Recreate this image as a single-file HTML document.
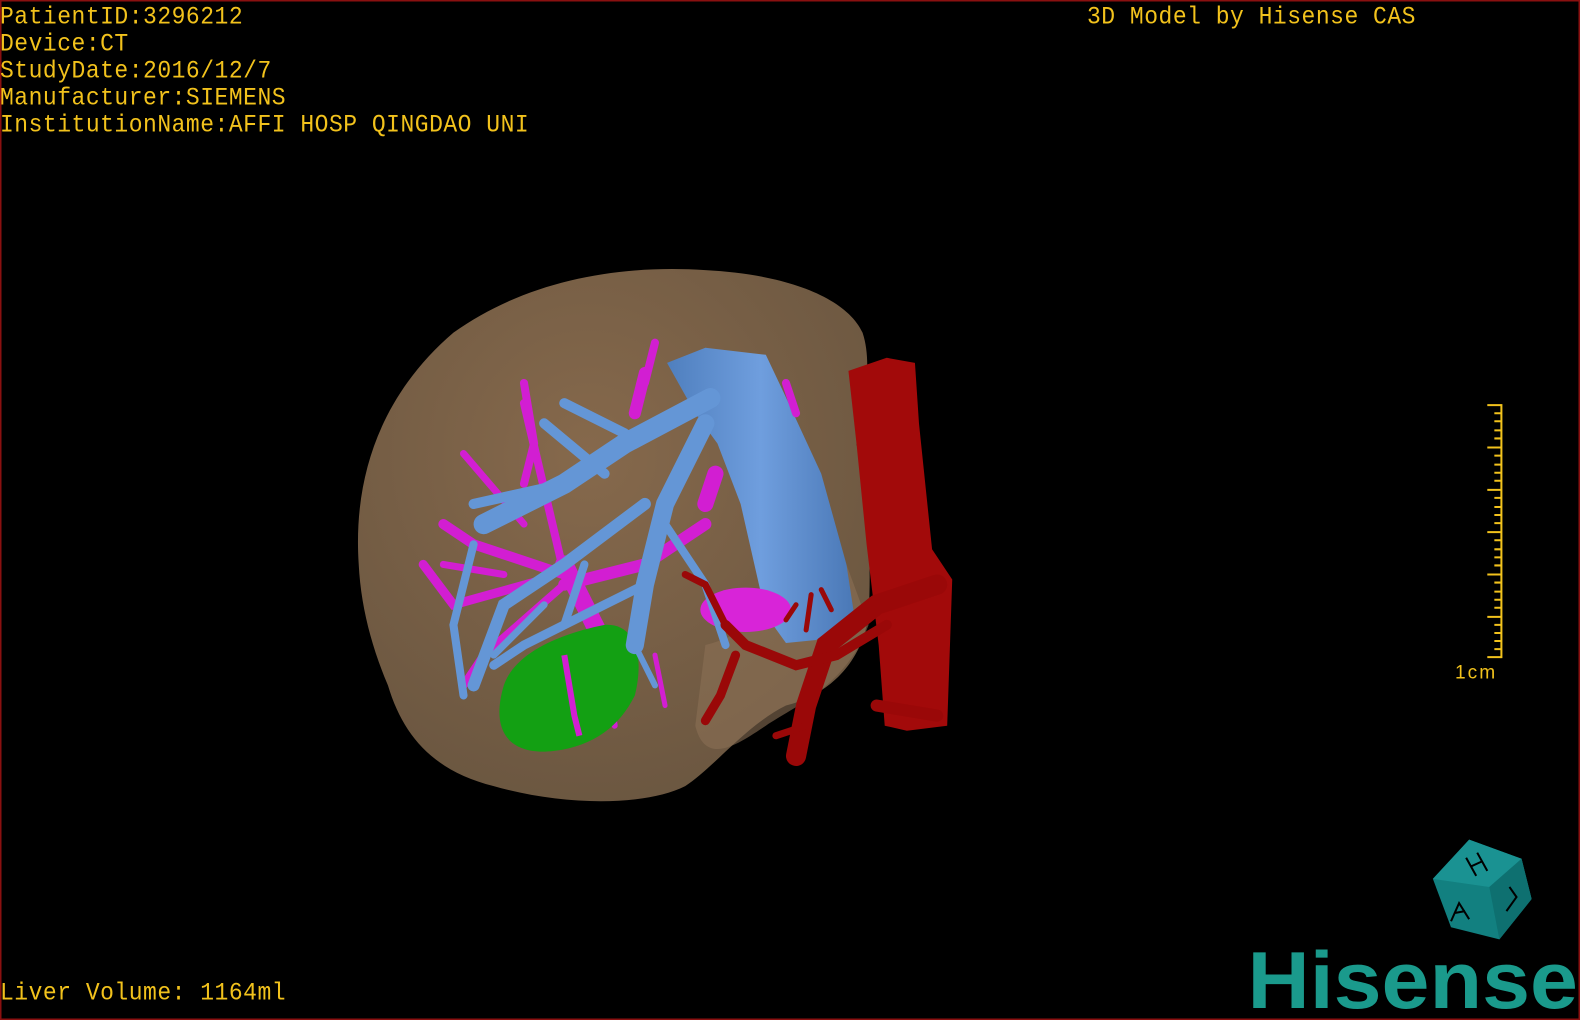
<!DOCTYPE html>
<html><head><meta charset="utf-8"><style>
html,body{margin:0;padding:0;background:#000;}
body{width:1580px;height:1020px;position:relative;overflow:hidden;}
.t{position:absolute;color:#f2c21c;font-family:"Liberation Mono",monospace;font-size:23px;line-height:25px;letter-spacing:0.5px;white-space:pre;transform:scaleY(1.08);transform-origin:top left;}
svg{position:absolute;left:0;top:0;}
</style></head><body>
<svg width="1580" height="1020" viewBox="0 0 1568 1012" preserveAspectRatio="none">
<defs>
<radialGradient id="lv" cx="0.45" cy="0.35" r="0.7"><stop offset="0" stop-color="#86694c"/><stop offset="1" stop-color="#6a5640"/></radialGradient>
<linearGradient id="ivc" x1="0" y1="0" x2="1" y2="0"><stop offset="0" stop-color="#4f7fbe"/><stop offset="0.5" stop-color="#6f9ede"/><stop offset="1" stop-color="#4a78b6"/></linearGradient>
</defs>
<rect x="0" y="0" width="1568" height="1012" fill="#000"/>
<rect x="0.5" y="0.5" width="1567" height="1011" fill="none" stroke="#8a1010" stroke-width="2"/>
<path d="M356,560 C350,470 380,390 450,330 C520,280 610,262 700,268 C780,272 840,295 856,330 C866,360 858,400 850,440 C858,480 866,540 862,610 C855,660 820,690 780,700 C740,720 710,760 680,780 C640,800 560,800 490,780 C430,765 400,730 385,680 C368,640 358,600 356,560 Z" fill="url(#lv)"/>
<path d="M700,640 C740,630 780,600 840,560 L862,620 C840,680 790,700 760,720 C730,740 700,760 690,720 Z" fill="#8a7055" opacity="0.6"/>
<path d="M662,360 L700,345 L760,352 L778,390 L815,470 L840,560 L848,612 L810,635 L780,638 L760,610 L735,500 L712,440 L690,410 Z" fill="url(#ivc)"/>
<g stroke="#d21ed2" stroke-linecap="round" fill="none">
<path d="M560,560 L600,640 L580,700" stroke-width="18"/>
<path d="M560,570 L470,540 L440,520" stroke-width="10"/>
<path d="M540,575 L450,600 L420,560" stroke-width="9"/>
<path d="M560,570 L520,400" stroke-width="8"/>
<path d="M520,520 L460,450" stroke-width="7"/>
<path d="M560,580 L480,650 L460,680" stroke-width="8"/>
<path d="M560,580 L640,560 L700,520" stroke-width="12"/>
<path d="M640,370 L630,410" stroke-width="12"/>
<path d="M650,340 L640,380" stroke-width="8"/>
<path d="M520,380 L530,440 L520,480" stroke-width="8"/>
<path d="M440,560 L500,570" stroke-width="7"/>
<path d="M780,380 L790,410" stroke-width="8"/>
<path d="M700,500 L710,470" stroke-width="16"/>
<path d="M600,650 L610,720" stroke-width="6"/>
<path d="M650,650 L660,700" stroke-width="5"/>
</g>
<ellipse cx="740" cy="605" rx="45" ry="22" fill="#d824d8"/>
<path d="M500,680 C510,650 550,630 600,620 C630,618 640,650 630,690 C615,720 590,740 550,745 C510,750 485,730 500,680 Z" fill="#13a013"/>
<path d="M560,650 L570,710 L575,730" stroke="#d21ed2" stroke-width="6" fill="none"/>
<g stroke="#6496d6" stroke-linecap="round" fill="none">
<path d="M705,395 L620,440 L560,480 L480,520" stroke-width="20"/>
<path d="M700,420 L660,500 L640,580 L630,640" stroke-width="18"/>
<path d="M640,500 L560,560 L500,600 L470,680" stroke-width="12"/>
<path d="M600,470 L540,420" stroke-width="10"/>
<path d="M560,480 L470,500" stroke-width="10"/>
<path d="M620,430 L560,400" stroke-width="10"/>
<path d="M640,580 L600,600 L520,640 L490,660" stroke-width="9"/>
<path d="M660,520 L700,580 L720,640" stroke-width="8"/>
<path d="M580,560 L560,620" stroke-width="8"/>
<path d="M540,600 L490,650" stroke-width="7"/>
<path d="M470,540 L450,620 L460,690" stroke-width="8"/>
<path d="M630,640 L650,680" stroke-width="6"/>
</g>
<path d="M842,368 L880,355 L908,360 L912,420 L925,545 L945,575 L940,720 L900,725 L878,720 L872,640 L860,540 L850,440 Z" fill="#a20a0a"/>
<g stroke="#9a0808" stroke-linecap="round" fill="none">
<path d="M930,580 L870,600 L820,640 L800,700 L790,750" stroke-width="20"/>
<path d="M880,620 L830,650 L790,660 L740,640 L720,620" stroke-width="10"/>
<path d="M720,620 L700,580 L680,570" stroke-width="7"/>
<path d="M730,650 L715,690 L700,715" stroke-width="9"/>
<path d="M800,720 L770,730" stroke-width="7"/>
<path d="M870,700 L930,710" stroke-width="12"/>
<path d="M790,600 L780,615 M805,590 L800,625 M815,585 L825,605" stroke-width="5"/>
</g>
<g stroke="#f2c21c" stroke-width="2" fill="none">
<path d="M1490,401 L1490,653"/>
<path d="M1476,402 H1490 M1476,444 H1490 M1476,486 H1490 M1476,528 H1490 M1476,570 H1490 M1476,612 H1490 M1476,652 H1490"/>
<path d="M1483,410 H1490 M1483,418 H1490 M1483,427 H1490 M1483,435 H1490 M1483,452 H1490 M1483,461 H1490 M1483,469 H1490 M1483,477 H1490 M1483,494 H1490 M1483,503 H1490 M1483,511 H1490 M1483,519 H1490 M1483,536 H1490 M1483,545 H1490 M1483,553 H1490 M1483,561 H1490 M1483,578 H1490 M1483,587 H1490 M1483,595 H1490 M1483,603 H1490 M1483,620 H1490 M1483,628 H1490 M1483,636 H1490 M1483,644 H1490"/>
</g>
<text x="1444" y="673" fill="#f2c21c" font-family="Liberation Sans,sans-serif" font-size="19" letter-spacing="2">1cm</text>
<path d="M1458,833 L1510,852 L1520,892 L1488,932 L1440,920 L1422,872 Z" fill="#128080"/>
<path d="M1458,833 L1510,852 L1478,880 L1422,872 Z" fill="#1a9292"/>
<path d="M1478,880 L1510,852 L1520,892 L1488,932 Z" fill="#0e7070"/>
<g stroke="#000" stroke-width="2" fill="none">
<path d="M1455,851 L1465,869 M1466,846 L1476,864 M1459,860 L1470,855"/>
<path d="M1498,880 L1505,890 L1495,904"/>
<path d="M1440,914 L1448,896 L1458,912 M1443,906 L1454,904"/>
</g>
<text x="1238" y="1000" fill="#1a9a8c" font-family="Liberation Sans,sans-serif" font-weight="bold" font-size="80" textLength="328" lengthAdjust="spacingAndGlyphs">Hisense</text>
</svg>
<div class="t" style="left:0;top:4px">PatientID:3296212
Device:CT
StudyDate:2016/12/7
Manufacturer:SIEMENS
InstitutionName:AFFI HOSP QINGDAO UNI</div>
<div class="t" style="left:1087px;top:4px">3D Model by Hisense CAS</div>
<div class="t" style="left:0;top:980px">Liver Volume: 1164ml</div>
</body></html>
